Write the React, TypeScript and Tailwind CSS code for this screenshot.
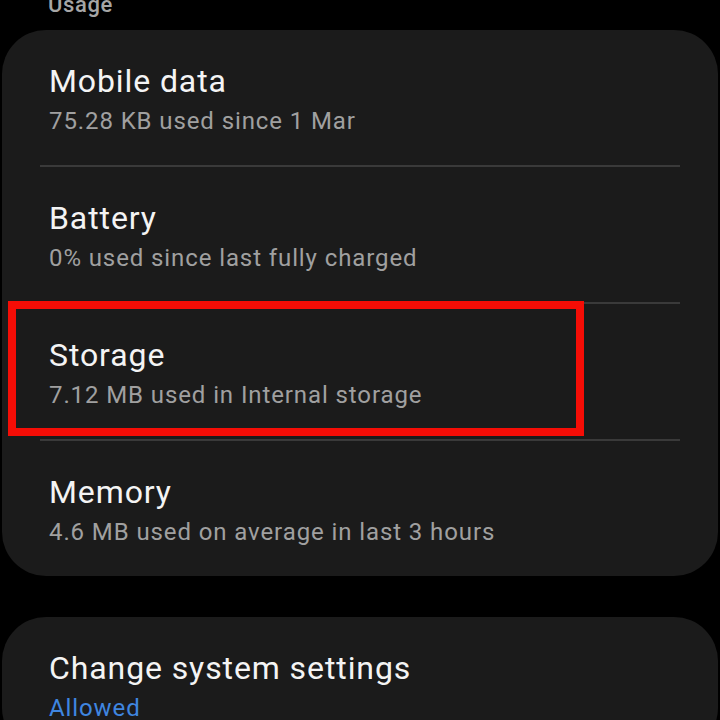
const USAGE_ROWS = [
  { title: "Mobile data", detail: "75.28 KB used since 1 Mar" },
  { title: "Battery", detail: "0% used since last fully charged" },
  { title: "Storage", detail: "7.12 MB used in Internal storage", marked: true },
  { title: "Memory", detail: "4.6 MB used on average in last 3 hours" },
];

function Row({
  title,
  detail,
  detailClass = "text-[#a0a0a0]",
  marked,
}: {
  title: string;
  detail: string;
  detailClass?: string;
  marked?: boolean;
}) {
  return (
    <div className="relative px-[47px] pt-[32px] pb-[29px]">
      <div className="text-[32px] leading-[38px] tracking-[0.9px] text-[#f4f4f4]">{title}</div>
      <div className={`mt-[6px] text-[24px] leading-[30px] tracking-[0.9px] ${detailClass}`}>{detail}</div>
      {marked && (
        <div className="absolute -top-[3px] left-[6px] w-[576px] h-[135px] border-[8px] border-[#f50d06]" />
      )}
    </div>
  );
}

export default function App() {
  return (
    <div
      className="w-[720px] h-[720px] overflow-hidden bg-black"
      style={{ fontFamily: "Roboto, 'Noto Sans', sans-serif" }}
    >
      <div className="h-[30px] overflow-hidden px-[48px]">
        <div className="-mt-[8px] text-[22px] leading-[26px] font-medium tracking-[0.6px] text-[#a6a6a6]">
          Usage
        </div>
      </div>

      <div className="mx-[2px] rounded-[44px] bg-[#1b1b1b]">
        {USAGE_ROWS.map((row, i) => (
          <div key={row.title}>
            {i > 0 && <div className="mx-[38px] h-[2px] bg-[#3a3a3a]" />}
            <Row title={row.title} detail={row.detail} marked={row.marked} />
          </div>
        ))}
      </div>

      <div className="mt-[41px] mx-[2px] rounded-[44px] bg-[#1b1b1b]">
        <Row title="Change system settings" detail="Allowed" detailClass="text-[#3f86e0]" />
      </div>
    </div>
  );
}
